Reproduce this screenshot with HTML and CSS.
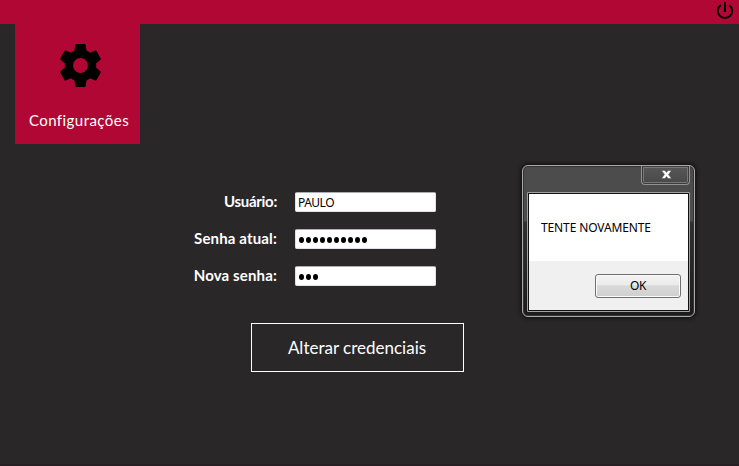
FILE: index.html
```html
<!DOCTYPE html>
<html lang="pt-BR">
<head>
<meta charset="utf-8">
<title>Configurações</title>
<link rel="stylesheet" href="styles.css">
</head>
<body>
<header class="topbar">
  <button class="power" aria-label="Sair">
    <svg width="18" height="18" viewBox="0 0 18 18" fill="none" stroke="#000" stroke-width="2"><path d="M9 0v10M4.900 3A7.200 7.200 0 1 0 13.100 3"/></svg>
  </button>
</header>
<main class="content">
  <section class="tile">
    <svg class="gear" width="41" height="43" viewBox="2.2 2 19.6 20" preserveAspectRatio="none"><path d="M19.43 12.98c.04-.32.07-.64.07-.98s-.03-.66-.07-.98l2.11-1.65c.19-.15.24-.42.12-.64l-2-3.46c-.12-.22-.39-.3-.61-.22l-2.49 1c-.52-.4-1.08-.73-1.69-.98l-.38-2.65C14.46 2.18 14.25 2 14 2h-4c-.25 0-.46.18-.49.42l-.38 2.65c-.61.25-1.17.59-1.69.98l-2.49-1c-.23-.09-.49 0-.61.22l-2 3.46c-.13.22-.07.49.12.64l2.11 1.65c-.04.32-.07.65-.07.98s.03.66.07.98l-2.11 1.65c-.19.15-.24.42-.12.64l2 3.46c.12.22.39.3.61.22l2.49-1c.52.4 1.08.73 1.69.98l.38 2.65c.03.24.24.42.49.42h4c.25 0 .46-.18.49-.42l.38-2.65c.61-.25 1.17-.59 1.69-.98l2.49 1c.23.09.49 0 .61-.22l2-3.46c.12-.22.07-.49-.12-.64l-2.11-1.65zM12 15.5c-1.93 0-3.5-1.57-3.5-3.5s1.57-3.5 3.500-3.500 3.500 1.570 3.500 3.500-1.570 3.500-3.500 3.500z"/></svg>
    <span class="tile-label">Configurações</span>
  </section>
  <form class="form">
    <label class="label-user" for="user">Usuário:</label>
    <input id="user" type="text" value="PAULO">
    <label class="label-current" for="current">Senha atual:</label>
    <div class="password" id="current"><i></i><i></i><i></i><i></i><i></i><i></i><i></i><i></i><i></i><i></i></div>
    <label class="label-new" for="new">Nova senha:</label>
    <div class="password" id="new"><i></i><i></i><i></i></div>
  </form>
  <button class="submit">Alterar credenciais</button>
</main>
<div class="dialog" role="dialog">
  <div class="titlebar">
    <button class="close" aria-label="Fechar">
      <svg width="11" height="9" viewBox="0 0 11 9"><path d="M.5.500h3.500l1.500 2 1.500-2h3.500L7.500 4.500l3 4H7L5.500 6.400 4 8.500H.5l3-4z" fill="#fff" stroke="#353b50" stroke-width=".4"/></svg>
    </button>
  </div>
  <div class="pane">
    <p class="message">TENTE NOVAMENTE</p>
    <div class="actions"><button class="ok">OK</button></div>
  </div>
</div>
</body>
</html>
```
FILE: styles.css
```css
* { box-sizing: border-box; }

body {
  margin: 0;
  height: 466px;
  overflow: hidden;
  background: #2a2728;
  border-bottom: 2px solid #262025;
  color: #fff;
  font-family: "Century Gothic", Lato, sans-serif;
}

button { margin: 0; padding: 0; font: inherit; color: inherit; }

.topbar {
  display: flex;
  justify-content: flex-end;
  height: 24px;
  padding: 2px 5px 0 0;
  background: #b10735;
}

.power { width: 18px; height: 18px; border: 0; background: none; }
.power svg { display: block; }

.tile {
  display: flex;
  flex-direction: column;
  align-items: center;
  width: 125px;
  height: 120px;
  margin-left: 15px;
  padding: 20px 0 0 6px;
  background: #b10735;
}

.gear { display: block; }

.tile-label {
  margin: 23px 3px 0 0;
  font-size: 15px;
  line-height: 20px;
  letter-spacing: 0.45px;
  white-space: nowrap;
}

.form {
  display: grid;
  grid-template-columns: 277px 141px;
  grid-auto-rows: 20px;
  column-gap: 18px;
  row-gap: 17px;
  margin-top: 48px;
}

.form label {
  text-align: right;
  font-size: 15px;
  font-weight: 700;
  line-height: 18px;
  letter-spacing: 0.15px;
}

.form .label-user { letter-spacing: -0.3px; }

.form input,
.password {
  width: 141px;
  height: 20px;
  margin: 0;
  padding: 0 2px;
  border: 1px solid #e2e3ea;
  border-top-color: #abadb3;
  border-radius: 2px;
  background: #fff;
  color: #000;
}

.form input {
  font: 12px/18px "Noto Sans", sans-serif;
  letter-spacing: -0.5px;
  outline: 0;
}

.password { display: flex; align-items: center; gap: 2px; padding: 2px 3px 0; }
.password i { width: 5px; height: 6px; border-radius: 50%; background: #000; }

.submit {
  display: block;
  width: 213px;
  height: 49px;
  margin: 37px 0 0 251px;
  padding-right: 1px;
  border: 1px solid #fff;
  background: none;
  font-size: 17px;
}

.dialog {
  position: absolute;
  left: 522px;
  top: 165px;
  width: 173px;
  height: 152px;
  padding: 0 4px 4px;
  border: 1px solid #aaa;
  border-radius: 6px;
  background: linear-gradient(#4b4b4b 0, #4d4d4d 55px, #303030 56px, #1b1b1c 100%);
  box-shadow: 0 0 4px 1px #0c0c0c, inset 0 0 0 1px #333;
}

.titlebar { display: flex; justify-content: flex-end; height: 26px; }

.close {
  display: flex;
  align-items: center;
  justify-content: center;
  width: 49px;
  height: 19px;
  padding: 0 0 1px 2px;
  border: 1px solid #929292;
  border-top: 0;
  border-radius: 0 0 4px 4px;
  background: linear-gradient(#585858, #484848);
  box-shadow: inset 0 0 0 1px #3b3b3b, inset 0 0 0 2px #777;
}

.pane {
  height: 120px;
  border: 1px solid #a0a0a0;
  border-radius: 1px;
  background: #f0f0f0;
  outline: 1px solid #111;
  outline-offset: -2px;
  color: #000;
  font-family: "Noto Sans", sans-serif;
  font-size: 12px;
}

.message {
  height: 68px;
  margin: 0;
  padding: 26px 0 0 13px;
  background: #fff;
  line-height: 18px;
  letter-spacing: -0.12px;
  white-space: nowrap;
}

.actions { display: flex; justify-content: flex-end; padding: 13px 8px 0; }

.ok {
  width: 86px;
  height: 24px;
  padding-bottom: 1px;
  border: 1px solid #707070;
  border-radius: 3px;
  background: linear-gradient(#f2f2f2 0, #ebebeb 47%, #dadada 48%, #cfcfcf 100%);
  box-shadow: inset 0 0 0 1px #fbfbfb;
  letter-spacing: -0.3px;
}
```
